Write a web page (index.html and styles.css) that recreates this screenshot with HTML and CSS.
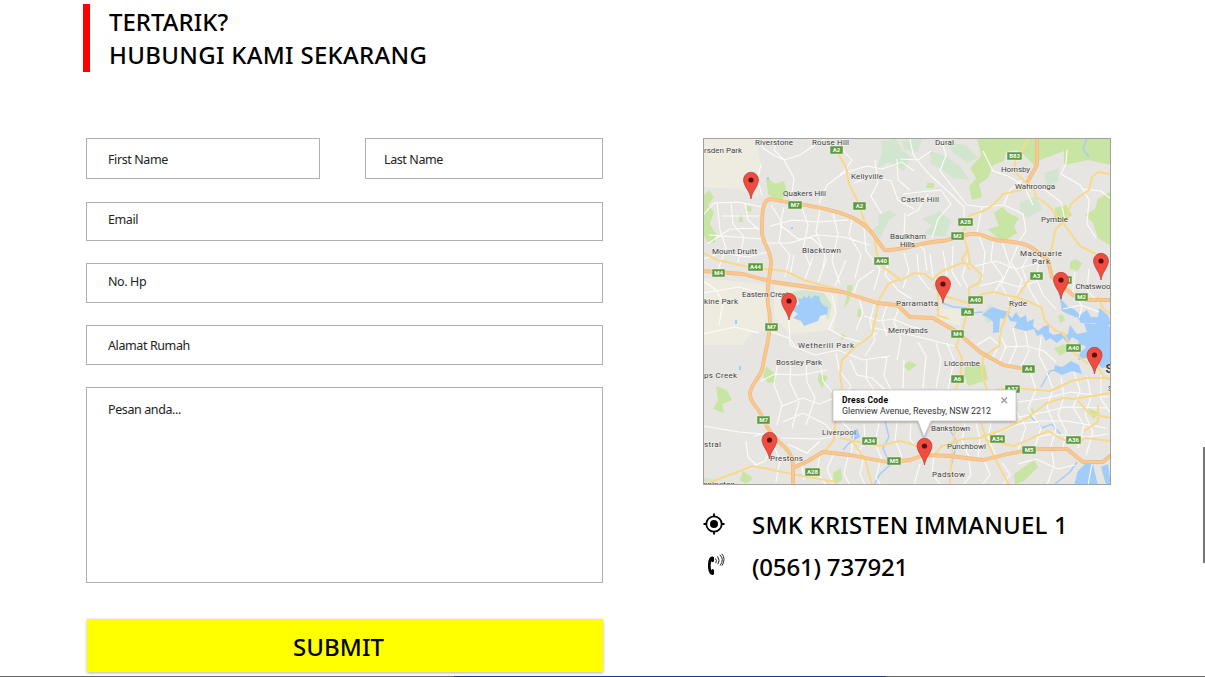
FILE: index.html
```html
<!DOCTYPE html>
<html lang="id">
<head>
<meta charset="utf-8">
<title>Hubungi Kami</title>
<link rel="stylesheet" href="styles.css">
</head>
<body>
<main class="page">
  <h1 class="heading"><span class="line-one">TERTARIK?</span><br><span class="line-two">HUBUNGI KAMI SEKARANG</span></h1>
  <div class="content">
    <form class="form">
      <div class="name-row">
        <input class="field first" type="text" placeholder="First Name">
        <input class="field last" type="text" placeholder="Last Name">
      </div>
      <input class="field email" type="text" placeholder="Email">
      <input class="field phone" type="text" placeholder="No. Hp">
      <input class="field address" type="text" placeholder="Alamat Rumah">
      <textarea class="field message" placeholder="Pesan anda..."></textarea>
      <button class="submit" type="button"><span class="submit-label">SUBMIT</span></button>
    </form>
    <section class="contact">
      <svg class="map" viewBox="703 138 408 347">
        <defs>
          <symbol id="pin" viewBox="-8 -20 16 29" overflow="visible">
            <path d="M0 8C-1 0-7-4-7.5-11A7.5 7.7 0 0 1 7.5-11C7-4 1 0 0 8Z" fill="#f04c40" stroke="#b83a32" stroke-width=".7"/>
            <circle cy="-11" r="2.6" fill="#5b1010"/>
          </symbol>
          <g id="motorways">
            <path d="M1035 250C1020 238 1000 244 987 237C970 229 956 239 943 241C922 241 905 251 885 250C877 243 876 231 855 219C834 208 800 205 771 199C762 199 762 213 762 232C762 244 772 250 771 264C770 278 766 285 768 305C774 327 765 350 762 370C758 381 744 390 753 403C764 415 764 425 774 437C783 447 793 450 793 468V485"/>
            <path d="M703 271 743 274 773 282 843 292 877 303 897 305 910 317 933 318 957 332 980 352 1003 365 1030 370"/>
            <path d="M793 468 808 461 823 452 850 455 887 462 910 460 924 455 950 456 983 460 1008 454 1033 449 1067 449 1083 462 1103 462 1111 455"/>
            <path d="M1037 138V165L1028 181M1035 250 1048 260 1052 277 1073 295 1087 300H1111"/>
          </g>
        </defs>
        <rect x="703" y="138" width="408" height="347" fill="#e7e5e1"/>
        <g fill="#eeebe1">
          <path d="M703 138H756L761 165 758 197 738 189 703 187Z"/>
          <path d="M703 278 765 284 768 330 752 333 742 345 703 345Z"/>
          <path d="M774 285 838 294 834 330 790 334 774 318Z"/>
          <path d="M940 308 962 310 960 326 940 320Z"/>
        </g>
        <g fill="#c9e5a4">
          <path d="M703 196 709 190 714 197 708 205 714 212 710 224 716 234 715 243 707 242 703 233Z"/>
          <path d="M766 177 775 184 784 181 787 193 780 202 768 194Z"/>
          <path d="M977 138H1111V165L1088 160 1064 165 1064 151 1040 160 1036 167 1026 157 1017 150 1006 152 1004 161 993 165 988 178 979 184 982 197 972 200 969 187 976 178 970 168 981 156Z"/>
          <path d="M994 213 1002 207 1010 214 1019 218 1014 226 1017 233 1004 241 995 236 988 229 999 226Z"/>
          <path d="M1055 208 1066 205 1072 215 1064 222 1054 218Z"/>
          <path d="M1098 199 1111 191V246L1098 238 1093 223 1085 215 1095 209Z"/>
          <path d="M847 285 853 285 849 301 844 309 847 294Z"/>
          <path d="M965 365H985L988 380 968 386 964 375Z"/>
          <path d="M716 386 727 390 732 400 722 404 724 413 713 409 718 400Z"/>
          <path d="M819 373 828 377 822 388 818 381Z"/>
          <path d="M1014 474 1034 460 1038 467 1024 481 1015 485Z"/>
          <path d="M1032 407 1035 414 1029 418 1030 411Z"/>
          <path d="M766 366 775 374 776 382 768 383 763 376Z"/>
          <path d="M909 361 917 365 909 371 903 366ZM833 473 841 468 842 480 834 485ZM743 471 753 478 746 484 740 480ZM858 309H861V317H857ZM840 334 847 336 842 340ZM739 216 742 214 743 222 739 222ZM747 206 752 207 751 212 747 211ZM927 183H934V188H926Z"/>
          <path d="M1070 262 1075 259 1082 263 1078 271 1070 269ZM1054 348 1065 344 1068 351 1060 356ZM1088 408 1100 413 1093 419ZM1058 316 1062 314 1065 320 1060 323Z"/>
        </g>
        <g fill="#cfe5cc" opacity=".85">
          <path d="M881 141 896 139 903 151 911 157 904 171 889 162 876 169 882 153ZM902 141 922 139 918 152 904 150Z"/>
          <path d="M878 216 889 210 897 215 889 220 880 238 872 230 879 224ZM922 219 940 211 951 221 945 237 924 234 932 225Z"/>
          <path d="M930 151 946 156 961 167 969 180 953 178 939 168 931 164ZM949 143 966 145 978 158 967 163 952 152Z"/>
          <path d="M1020 203 1036 196 1042 209 1028 218 1020 211ZM1044 173 1059 168 1058 181 1047 187Z"/>
          <path d="M791 292 805 290 824 293 832 305 828 320 822 308 812 300 799 300Z"/>
          <path d="M982 314 990 304 995 315 988 324ZM932 286 939 279 946 286 938 293ZM703 477 718 480 710 485 703 485Z"/>
        </g>
        <g fill="#a2ccfa">
          <path d="M792 310 796 306 799 304 798 298 802 299 804 296 807 298 809 295 811 299 815 295 817 297 819 295 820 301 824 306 828 307 827 314 820 316 818 321 804 326 801 321 793 318 798 314Z"/>
          <path d="M982 315 992 307 1001 310 1010 312 1005 319 1000 318 999 332 993 333 993 322 987 317Z"/>
          <path d="M1006 312 1012 318 1016 312 1020 318 1026 315 1027 322 1034 319 1033 326 1038 331 1044 326 1049 325 1049 332 1053 335 1061 333 1064 336 1068 334 1070 325 1077 334 1087 332 1084 323 1096 324 1101 319 1111 328V352L1104 349 1100 354 1093 347 1088 350 1084 345 1077 346 1079 341 1072 337 1068 344 1063 338 1057 343 1050 338 1046 341 1042 334 1037 336 1034 329 1026 331 1014 328 1017 322 1010 321Z"/>
          <path d="M1080 352 1090 345 1111 348V366L1102 368 1090 357 1078 360Z"/>
          <path d="M1058 288 1061 287 1062 300 1068 307 1074 309 1080 315 1087 310 1091 317 1098 317 1099 308 1108 315 1111 324 1101 329 1095 323 1081 323 1078 318 1070 315 1062 311Z"/>
          <path d="M1055 365 1062 367 1071 361 1079 365 1082 374 1072 371 1062 375 1054 371Z"/>
          <path d="M1074 485 1078 471 1085 464 1093 464 1095 473 1098 485ZM1101 467 1108 464 1111 485H1106ZM851 437 857 428 860 437 853 440Z"/>
          <path d="M767 177H769V180H767ZM735 320H737V324H735ZM739 366H741V370H739ZM791 227H793V229H791Z"/>
        </g>
        <g fill="none" stroke="#a2ccfa" stroke-width="1.4">
          <path d="M942 303 954 307 967 308 972 313 983 312M1087 138 1083 149 1089 157M885 421 889 437 883 448 890 465 880 474 874 485M860 436 849 443 843 450M1031 417 1042 428 1052 424 1061 435M1063 368 1050 371 1041 387M1077 462 1070 472 1055 484M1104 335 1108 348M950 430 957 442 951 466"/>
        </g>
        <g fill="none" stroke="#fcfcfa" stroke-width="1.1">
          <path d="M756 138 763 148 775 156 784 160 794 178 791 199M778 138 774 150 784 160 800 155 815 145 826 138M761 165 757 178 762 195"/>
          <path d="M703 215 714 203 738 202 762 207M717 202 720 230 726 248 718 270M731 202 733 224 744 237 738 262M745 204 748 220 759 230M707 244 730 229 758 228M709 235 762 239M722 216 759 216M703 259 721 253 748 257 768 252"/>
          <path d="M771 205 782 222 779 242 790 255 785 277M784 207 780 225 798 239 812 238 826 251M801 205 808 225 803 248 810 266M820 209 816 232 825 255 822 273M770 226 793 220 817 222 848 220M766 243 790 243 817 235 844 237 870 245M833 213 838 234 832 261 840 284M852 219 849 235 861 255 855 278M864 227 866 251 880 269 874 290M843 150 852 160 842 174 827 185 819 203M840 174 867 166 882 169 902 162 914 171M854 183 872 176 891 181 898 200 914 209M875 160 878 183 871 196 881 213M897 159 898 180 910 190M910 139 913 154 921 165 932 177 951 194 964 207 964 234M900 159 918 160 931 151M903 194 920 192 941 190 951 204 938 219 932 238M941 139 946 155 940 171 951 185 967 205 982 207 977 232M907 216 918 210 928 194M905 213 904 237 924 249 927 271M982 207 1004 205 1023 214 1026 231 1018 243M983 151 993 171 1008 176 1024 186 1033 205M1034 187 1045 190 1061 202 1065 220M1067 150 1066 163 1061 174 1080 185 1089 200 1087 224 1096 238M1023 179 1010 190 1004 204M1111 199 1101 191 1083 189M703 281 716 290 723 302 719 325M703 293 739 287 757 292M703 334 735 327 759 333M789 320 790 345 815 355 838 350 863 360 890 356M768 331 789 338 795 346M832 295 836 313 829 329 843 337 861 342 877 333M790 276 794 255M805 279 813 257M818 282 827 258M835 286 846 260M853 296 858 281 874 270M859 298 863 313 856 330M875 302 870 321 875 340 865 356M887 305 882 320 887 336M899 307 894 322 901 339 897 360M864 316 880 321 893 319 910 326 928 331M873 328 906 334 931 340 954 346M890 256 885 275 899 291 912 299M904 253 909 270 903 288M917 254 919 276 930 290M930 254 933 277 943 286M943 251 947 274 937 288M953 246 952 272 961 286M966 240 969 256 962 276 970 292M979 236 985 252 982 280M993 241 991 260 1003 277 994 294M1002 242 1010 265 1001 285 1010 300M1018 245 1011 262 1022 280 1015 302M1030 253 1022 268 1030 290 1042 310M975 266 996 261 1016 269 1038 263M980 286 999 281 1019 287 1038 281M1040 257 1036 278 1043 295 1056 309M1075 272 1073 291 1082 306 1079 318M1089 269 1087 290 1099 303M1063 309 1081 305 1099 312M977 345 990 337 999 345 991 361M999 333 1006 347 998 365M1013 328 1017 346 1009 364M1025 331 1029 351 1021 367M1041 337 1039 356 1047 371M1004 347 1026 346 1044 351 1056 362M703 426 739 432 763 434M781 438 820 439 832 437M761 381 775 374 801 375 827 370M778 361 774 385 782 405 777 425M791 360 790 382 799 402 792 428M806 362 807 382 815 398 806 425M820 359 823 381 837 398M836 353 839 370 851 386 848 393M850 360 857 375 872 378 884 389M867 360 866 378 876 393M887 356 884 376 891 390M904 360 903 388M918 342 926 356 923 388M936 343 941 360 936 388M947 343 954 360 948 389M782 406 803 398 819 404 832 399M783 422 803 413 825 424 837 437M745 470 765 461 774 443M746 441 748 457 757 466M754 436 770 432M771 439 780 460 776 482M788 444 807 453 820 441M801 458 804 480M820 453 817 472 826 485M834 453 827 469 834 485M848 456 844 474 850 485M864 456 860 474 865 485M880 461 876 478 881 485M849 410 843 423 854 434 851 454M864 424 865 442 857 453M879 423 875 443 882 460M897 423 895 440 902 457M911 423 910 439 917 448M920 464 914 485M934 455 932 474 941 485M965 423 962 441 970 459M976 423 980 439 978 458M991 423 988 438 996 456M1018 391 1015 410 1026 427 1018 450M1031 374 1036 390 1028 408 1041 428 1034 450M1047 373 1053 389 1047 407 1056 429 1050 449M1061 377 1064 397 1058 415 1066 431 1063 449M1074 372 1080 391 1073 407 1084 425 1078 448M1087 376 1091 397 1085 415 1093 432 1086 455M1101 375 1101 399 1111 414M1018 402 1046 398 1071 392 1108 397M1019 417 1045 412 1065 407 1108 408M996 434 1018 424 1041 421 1067 421 1106 428M1027 439 1052 434 1087 437 1108 434M1018 464 1036 459 1058 469 1075 465M1002 463 1010 474 1003 485M969 461 971 475 963 485M985 462 990 475 982 485M1092 464 1088 485M1052 452 1054 466 1047 485"/>
        </g>
        <g fill="none" stroke="#f8d98c" stroke-width="2" stroke-linejoin="round">
          <path d="M836 150 846 167 849 184 857 200 864 220 874 236 877 255 884 268 900 279 888 284 879 300 872 335 855 347 842 360 840 374 842 390 836 405 834 440 823 453"/>
          <path d="M703 253 717 260 753 268 785 271 804 280 839 290"/>
          <path d="M1028 139 1022 150 1016 155 1014 171 1025 182 1033 187 1036 197 1048 205 1063 223 1080 246 1096 254M1022 190 1003 194 994 204 984 211 970 215 963 232 968 251 970 264M1111 174 1098 172 1092 177 1089 190 1079 197 1071 204 1066 219 1055 230 1051 253M900 281 914 273 925 274 932 280 942 271 962 263 970 264 982 275 979 283 969 288 969 305 964 325 956 346 962 358 960 380 954 392M936 286 941 295 968 303 982 294 994 292 1022 299 1041 307 1045 321 1056 331 1064 333 1073 352 1088 364M1035 271 1028 281 1019 294 1010 307 1001 329 999 346 983 357 982 375 987 390M970 270 962 259 968 249M938 286 938 317M949 319 937 315M1111 314 1103 309 1098 297M996 390 1013 388 1050 391 1072 381 1086 378 1111 378M981 437 1000 431 1027 418 1047 403 1063 398 1073 399 1111 393M957 425 954 437 951 465 950 485M981 423 988 444 1000 468 1009 485M840 438 854 441 879 446 900 441 912 444 929 454M703 485 724 477 753 466 792 474 836 482M852 441 865 459 872 485M1111 418 1090 414 1078 401M1098 405 1098 422 1084 431M982 438 963 439 942 446 935 454M985 440 1014 446 1048 431 1060 438 1074 444 1086 438 1111 441M1096 364 1104 377 1111 380"/>
        </g>
        <use href="#motorways" class="motorway-edge"/>
        <use href="#motorways" class="motorway-fill"/>
        <g class="place">
          <text x="755" y="145" textLength="38">Riverstone</text><text x="812" y="144.500" textLength="37">Rouse Hill</text><text x="935" y="144.500" textLength="19">Dural</text>
          <text x="704" y="153" textLength="38">rsden Park</text><text x="851" y="179" textLength="32">Kellyville</text><text x="1001" y="172" textLength="29">Hornsby</text><text x="1015" y="188.500" textLength="40">Wahroonga</text>
          <text x="783" y="195.500" textLength="43">Quakers Hill</text><text x="901" y="201.500" textLength="38">Castle Hill</text><text x="1041" y="221.500" textLength="27">Pymble</text>
          <text x="890" y="238.500" textLength="36">Baulkham</text><text x="900" y="246.500" textLength="15">Hills</text><text x="712" y="253.500" textLength="45">Mount Druitt</text><text x="802" y="252.500" textLength="39">Blacktown</text>
          <text x="1020" y="255.500" textLength="42">Macquarie</text><text x="1032" y="264" textLength="18">Park</text><text x="1075.500" y="288.500" textLength="35">Chatswoo</text>
          <text x="742" y="296.500" textLength="48">Eastern Creek</text><text x="704" y="303.500" textLength="34">kine Park</text><text x="896" y="305.500" textLength="42">Parramatta</text><text x="1009" y="306" textLength="18">Ryde</text><text x="888" y="332.500" textLength="40">Merrylands</text>
          <text x="798" y="348" textLength="56">Wetherill Park</text><text x="776" y="364.500" textLength="46">Bossley Park</text><text x="944" y="366" textLength="36">Lidcombe</text><text x="704" y="378" textLength="33">ps Creek</text>
          <text x="822" y="434.500" textLength="34">Liverpool</text><text x="931" y="431" textLength="39">Bankstown</text><text x="947" y="449" textLength="39">Punchbowl</text><text x="932" y="477" textLength="33">Padstow</text><text x="704" y="446.500" textLength="17">stral</text><text x="770" y="461" textLength="33">Prestons</text><text x="703" y="487" textLength="32">nnington</text><text x="997" y="488.500" textLength="33">Mortdale</text>
          <text class="city" x="1105.500" y="373">S</text><text x="1108" y="391">S</text>
        </g>
        <g class="shields">
          <g fill="#5b9a3e" stroke="#f2f5e8" stroke-width=".5">
            <path d="M830 146h13v8h-13zM788 201h14v8h-14zM853 202h13v8h-13zM1007 152h15v8h-15zM958 218h15v8h-15zM951 232h13v8h-13zM748 263h15v8h-15zM712 269h13v8h-13zM874 257h15v8h-15zM1030 272h13v8h-13zM1061 276h11v8h-11zM1075 293h13v8h-13zM968 296h15v8h-15zM961 308h13v8h-13zM951 330h13v8h-13zM765 323h13v8h-13zM1066 344h15v8h-15zM1022 365h13v8h-13zM951 375h13v8h-13zM1005 385h15v8h-15zM757 416h13v8h-13zM862 437h15v8h-15zM887 457h14v8h-14zM805 468h15v8h-15zM990 435h15v8h-15zM1022 446h14v8h-14zM1066 436h15v8h-15z"/>
          </g>
          <g class="shield-text">
            <text x="836.5" y="152.3">A2</text><text x="795" y="207.3">M7</text><text x="859.5" y="208.3">A2</text><text x="1014.5" y="158.3">B83</text><text x="965.5" y="224.3">A28</text><text x="957.5" y="238.3">M2</text><text x="755.5" y="269.3">A44</text><text x="718.5" y="275.3">M4</text><text x="881.5" y="263.3">A40</text><text x="1036.5" y="278.3">A3</text><text x="1069" y="282.3">1</text><text x="1081.5" y="299.3">M2</text><text x="975.5" y="302.3">A40</text><text x="967.5" y="314.3">A6</text><text x="957.5" y="336.3">M4</text><text x="771.5" y="329.3">M7</text><text x="1073.5" y="350.3">A40</text><text x="1028.5" y="371.3">A4</text><text x="957.5" y="381.3">A6</text><text x="1012.5" y="391.3">A37</text><text x="763.5" y="422.3">M7</text><text x="869.5" y="443.3">A34</text><text x="894" y="463.3">M5</text><text x="812.5" y="474.3">A28</text><text x="997.5" y="441.3">A34</text><text x="1029" y="452.3">M5</text><text x="1073.5" y="442.3">A36</text>
          </g>
        </g>
        <path class="bubble" d="M833 390H1016V421H931L924 437 918 421H833Z"/>
        <text class="bubble-title" x="842" y="403" textLength="46">Dress Code</text>
        <text class="bubble-text" x="842" y="413.500" textLength="149" lengthAdjust="spacingAndGlyphs">Glenview Avenue, Revesby, NSW 2212</text>
        <path d="M1001.5 397.5 1007 403M1007 397.5 1001.5 403" stroke="#999" stroke-width="1.4"/>
        <use href="#pin" x="743" y="171" width="16" height="29"/>
        <use href="#pin" x="781" y="292" width="16" height="29"/>
        <use href="#pin" x="935" y="275" width="16" height="29"/>
        <use href="#pin" x="1053" y="271" width="16" height="29"/>
        <use href="#pin" x="1093" y="252" width="16" height="29"/>
        <use href="#pin" x="1086.500" y="346" width="16" height="29"/>
        <use href="#pin" x="761.500" y="431" width="16" height="29"/>
        <use href="#pin" x="916.500" y="437" width="16" height="29"/>
        <rect x="703.5" y="138.5" width="407" height="346" fill="none" stroke="#a2a2a2"/>
      </svg>
      <div class="info">
        <svg class="icon" viewBox="0 0 22 22"><circle cx="11" cy="11" r="7.7" fill="none" stroke="#000" stroke-width="1.8"/><circle cx="11" cy="11" r="4"/><path d="M11 .5V4M11 18v3.500M.5 11H4M18 11h3.500" stroke="#000" stroke-width="1.8"/></svg>
        <span class="school">SMK KRISTEN IMMANUEL 1</span>
      </div>
      <div class="info">
        <svg class="icon phone-icon" viewBox="0 0 22 22"><path d="M9.800 3.500C6.500 3 5 7 5 12.500S6.500 22 9.800 22L11 21.300V17L9.500 16 8.200 17C7.500 14.500 7.500 10.500 8.200 8.500L9.500 9.300 11 8.400V4.300Z"/><path d="M12.400 5.500Q14.200 7.500 12.700 10.200M14.500 3.400Q17.500 7 14.900 11.300M16.800 1.800Q19.200 4.200 19.300 6.600 19.200 10 17 12.500M18.800.8Q21 3 21 6.500 20.800 10 19 12.700" fill="none" stroke="#111" stroke-width=".9"/></svg>
        <span class="number">(0561) 737921</span>
      </div>
    </section>
  </div>
</main>
<div class="scroll-thumb"></div>
<div class="bottom-edge"></div>
</body>
</html>
```
FILE: styles.css
```css
* { box-sizing: border-box; }
body { margin: 0; height: 677px; overflow: hidden; background: #fff; color: #000; font-family: "Noto Sans", "Open Sans", sans-serif; }
.page { padding: 4px 94px 0 83px; }
.heading { margin: 0; height: 68px; padding: 1px 0 0 19px; border-left: 7px solid #f00; font-size: 24px; font-weight: 500; line-height: 33px; white-space: nowrap; }
.line-two { letter-spacing: 0.3px; }
.content { display: flex; gap: 100px; padding: 66px 0 0 3px; }
.form { display: flex; flex-direction: column; width: 517px; }
.name-row { display: flex; gap: 44px; margin-bottom: 23px; }
.field { display: block; margin: 0; padding: 0 20px 0 21px; border: 1px solid #b0b0b0; border-radius: 0; outline: 0; background: #fff; font: 400 12.5px "Noto Sans", "Open Sans", sans-serif; letter-spacing: -0.4px; width: 100%; }
.field::placeholder { color: #222; opacity: 1; }
.first { width: 234px; height: 41px; padding-top: 2px; }
.last { width: 238px; height: 41px; padding: 2px 20px 0 18px; margin-left: 1px; }
.email { height: 39px; margin-bottom: 22px; padding-bottom: 4px; }
.phone { height: 40px; margin-bottom: 22px; padding-bottom: 4px; }
.address { height: 40px; margin-bottom: 22px; }
.message { height: 196px; padding-top: 13px; resize: none; }
.submit { height: 53px; margin: 36px 0 0 1px; padding: 2px 0 0; border: 0; background: #ff0; box-shadow: 0 1px 3px rgba(0, 0, 0, .3); color: #000; font: 500 24px "Noto Sans", "Open Sans", sans-serif; letter-spacing: 0.1px; }
.submit-label { padding-right: 13px; }
.contact { width: 408px; }
.map { display: block; width: 408px; height: 347px; overflow: hidden; font-family: Roboto, sans-serif; }
.motorway-edge, .motorway-fill { fill: none; stroke-linejoin: round; stroke-linecap: round; }
.motorway-edge { stroke: #efb980; stroke-width: 3.8px; }
.motorway-fill { stroke: #fac88c; stroke-width: 2.4px; }
.place { font-size: 8px; fill: #3a3a3a; stroke: none; }
.place text { paint-order: stroke; stroke: rgba(255, 255, 255, .6); stroke-width: 1px; }
.place .city { font-size: 12px; font-weight: 700; }
.shield-text { font-size: 6px; font-weight: 700; fill: #fff; text-anchor: middle; }
.bubble { fill: #fff; stroke: #c8c8c8; stroke-width: .8; filter: drop-shadow(0 1px 1px rgba(0, 0, 0, .3)); }
.bubble-title { font-size: 8.5px; font-weight: 700; }
.bubble-text { font-size: 8.7px; fill: #333; }
.info { display: flex; align-items: center; height: 42px; font-size: 24px; font-weight: 500; line-height: 42px; white-space: nowrap; }
.map + .info { margin-top: 19px; }
.school { letter-spacing: 0.22px; }
.number { letter-spacing: -0.18px; }
.icon { width: 22px; height: 22px; margin: 0 27px 3px 0; }
.phone-icon { margin-bottom: 6px; }
.scroll-thumb { position: absolute; right: 0; top: 447px; width: 2px; height: 116px; background: #777; }
.bottom-edge { position: absolute; left: 0; bottom: 0; width: 100%; height: 1px; background: linear-gradient(to right, #666 0 454px, #153e83 454px 886px, #666 886px); }
```
